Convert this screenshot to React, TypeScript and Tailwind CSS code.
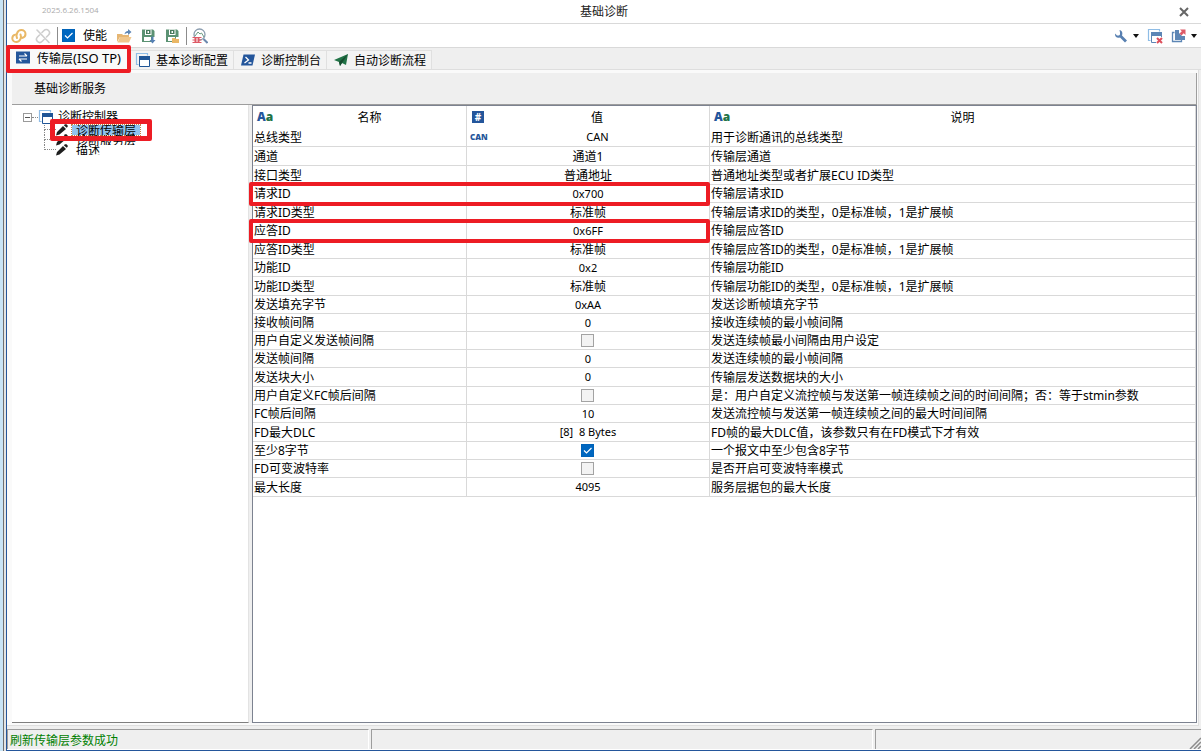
import type { ReactNode } from 'react';

type Row = {
  name: string;
  value: string | boolean;
  desc: string;
  tall?: boolean;
  marked?: boolean;
  can?: boolean;
};

const rows: Row[] = [
  { name: '总线类型', value: 'CAN', desc: '用于诊断通讯的总线类型', tall: true, can: true },
  { name: '通道', value: '通道1', desc: '传输层通道', tall: true },
  { name: '接口类型', value: '普通地址', desc: '普通地址类型或者扩展ECU ID类型', tall: true },
  { name: '请求ID', value: '0x700', desc: '传输层请求ID', marked: true },
  { name: '请求ID类型', value: '标准帧', desc: '传输层请求ID的类型，0是标准帧，1是扩展帧', tall: true },
  { name: '应答ID', value: '0x6FF', desc: '传输层应答ID', marked: true },
  { name: '应答ID类型', value: '标准帧', desc: '传输层应答ID的类型，0是标准帧，1是扩展帧', tall: true },
  { name: '功能ID', value: '0x2', desc: '传输层功能ID' },
  { name: '功能ID类型', value: '标准帧', desc: '传输层功能ID的类型，0是标准帧，1是扩展帧', tall: true },
  { name: '发送填充字节', value: '0xAA', desc: '发送诊断帧填充字节' },
  { name: '接收帧间隔', value: '0', desc: '接收连续帧的最小帧间隔' },
  { name: '用户自定义发送帧间隔', value: false, desc: '发送连续帧最小间隔由用户设定' },
  { name: '发送帧间隔', value: '0', desc: '发送连续帧的最小帧间隔' },
  { name: '发送块大小', value: '0', desc: '传输层发送数据块的大小', tall: true },
  { name: '用户自定义FC帧后间隔', value: false, desc: '是：用户自定义流控帧与发送第一帧连续帧之间的时间间隔；否：等于stmin参数' },
  { name: 'FC帧后间隔', value: '10', desc: '发送流控帧与发送第一帧连续帧之间的最大时间间隔' },
  { name: 'FD最大DLC', value: '[8]  8 Bytes', desc: 'FD帧的最大DLC值，该参数只有在FD模式下才有效', tall: true },
  { name: '至少8字节', value: true, desc: '一个报文中至少包含8字节' },
  { name: 'FD可变波特率', value: false, desc: '是否开启可变波特率模式' },
  { name: '最大长度', value: '4095', desc: '服务层据包的最大长度', tall: true },
];

const treeItems = ['诊断传输层', '诊断服务层', '描述'];

function Icon({ children }: { children: ReactNode }) {
  return (
    <svg viewBox="0 0 16 16" className="size-4 shrink-0" fill="none" aria-hidden="true">
      {children}
    </svg>
  );
}

function LinkIcon() {
  return (
    <Icon>
      <g stroke="#e9b866" strokeWidth="2" strokeLinecap="round">
        <path d="M6 10C4.800 7.500 6 2 10.300 2c2.500 0 4.200 1.800 4.200 4 0 2-1.500 3.600-3.500 3.900" />
        <path d="M9.500 6.500c1.200 2.500 0 7.500-4.300 7.500-2.300 0-3.900-1.700-3.900-3.800C1.300 8.300 2.600 7 4.300 6.600" />
      </g>
    </Icon>
  );
}

function UnlinkIcon() {
  return (
    <Icon>
      <g stroke="#cdcdcd" strokeWidth="1.600" strokeLinecap="round">
        <path d="M4.500 7 2.500 9a3 3 0 0 0 4.500 4.500l2-2M11.500 9l2-2A3 3 0 0 0 9 2.500l-2 2M2 2l12 12.500" />
      </g>
    </Icon>
  );
}

function FolderIcon() {
  return (
    <Icon>
      <path d="M1 14V6h5l1 1h6v2H4z" fill="#e6b673" />
      <path d="M4 9h11.500L13 14.500H1.500z" fill="#f0c68c" />
      <path d="M8.500 6.500c.3-2.200 1.500-3.500 3.500-3.500V1l3.500 3L12 7V5c-1.500 0-2.500.5-3.500 1.500z" fill="#5d86b5" />
    </Icon>
  );
}

function SaveIcon({ folder }: { folder?: boolean }) {
  return (
    <Icon>
      <path d="M2 1.500h11l1.500 1.500v6H12v5H2z" fill="#5b9273" />
      <path d="M5 1.500h6.500V7H5z" fill="#fff" />
      <path d="M6 2h4.500v4H6z" fill="#477a5d" />
      <path d="M7.500 3H9v2H7.500z" fill="#fff" />
      <path d="M4 9h7v4H4z" fill="#fff" />
      {folder ? (
        <path d="M8 10h3l1 1h3v4H8z" fill="#eab766" />
      ) : (
        <path d="M11.500 8.500h2V12h2l-3 3.500-3-3.500h2z" fill="#5580b3" />
      )}
    </Icon>
  );
}

function DebugSearchIcon() {
  return (
    <Icon>
      <circle cx="7.500" cy="6.500" r="5.500" stroke="#8b9daf" strokeWidth="1.300" />
      <path d="m11.500 11 4 4" stroke="#6c89ae" strokeWidth="2" />
      <path d="m3 8 3-4 2 2 1.500-1 2.500 4" stroke="#6b9a80" />
      <path d="M2.500 9h5v6h-5z" fill="#de5a66" />
      <path d="M.5 9.500h9M.5 12h9M.5 14.500h9" stroke="#de5a66" />
      <path d="M5 10v4" stroke="#fff" />
    </Icon>
  );
}

function WindowsIcon({ closed }: { closed?: boolean }) {
  const color = closed ? '#5d86b5' : '#1f5596';
  return (
    <Icon>
      <path d="M3.500 12.500h-2v-11h11v2" stroke="#8fbde6" strokeWidth="1.200" />
      <path d="M4.500 4.500h10v10h-10z" fill="#fff" stroke={color} />
      <path d="M4 4h11v4H4z" fill={color} />
      {closed && (
        <>
          <path d="M9 9h7v7H9z" fill="#fff" />
          <path d="m10 10 5 5m0-5-5 5" stroke="#dd4e5b" strokeWidth="2" />
        </>
      )}
    </Icon>
  );
}

function TransferIcon() {
  return (
    <Icon>
      <path d="M1 1.500h14v12H1z" fill="#24569b" />
      <path d="M4 6h8M9.500 3.500 12 6M12 9H4m2.500 2.500L4 9" stroke="#fff" strokeWidth="1.100" />
    </Icon>
  );
}

function ConsoleIcon() {
  return (
    <Icon>
      <path d="M3.500 2.500H15l-2.500 11H1z" fill="#24569b" />
      <path d="m5.500 5 3 3-4 3M8.500 11h3" stroke="#fff" strokeWidth="1.300" />
    </Icon>
  );
}

function PlaneIcon() {
  return (
    <Icon>
      <path d="M1 8 15 2l-2 11-4-2-2 3-1-4z" fill="#217346" />
      <path d="M6 10 15 2 7 14z" fill="#174d30" />
    </Icon>
  );
}

function WrenchIcon() {
  return (
    <Icon>
      <path
        d="M6.500 2C9 2.500 10 5 9 7.500l5 5-2 2-5-5C4.500 10.500 1.500 9 2 5.500l2 2H6l1-1V4.500z"
        fill="#5880b1"
      />
    </Icon>
  );
}

function PopoutIcon() {
  return (
    <Icon>
      <path d="M3.500 4.500h-2v9h9v-2" stroke="#5d86b5" strokeWidth="1.300" />
      <path d="M4 2h4v3l3 3h3v4H4z" fill="#5d86b5" />
      <path d="M9 1.500h5.500V7L12.700 5.200 10.500 7.500 8.500 5.500l2.300-2.200z" fill="#dd5a67" />
    </Icon>
  );
}

function PencilIcon() {
  return (
    <svg viewBox="0 0 12 12" className="size-3 shrink-0" aria-hidden="true">
      <path d="m0 11.500 1-3.500 6-6 3 3-6.500 5.500zM7.800 1.200 9 .3h1.500l1.200 1.200v1.300l-1 1z" fill="#1f1f1f" />
    </svg>
  );
}

function Caret() {
  return (
    <svg viewBox="0 0 6 4" className="h-1 w-1.5" aria-hidden="true">
      <path d="M0 0h6L3 4z" fill="#111" />
    </svg>
  );
}

function Checkbox({ label, id, checked }: { label?: string; id: string; checked: boolean }) {
  return (
    <span className="relative block size-[13px]">
      <input
        id={id}
        type="checkbox"
        aria-label={label}
        defaultChecked={checked}
        className="peer block size-[13px] appearance-none border border-[#a3a3a3] bg-[#f3f3f3] checked:border-[#0063b8] checked:bg-[#0067c0]"
      />
      <svg
        viewBox="0 0 13 13"
        className="pointer-events-none absolute inset-0 hidden size-[13px] peer-checked:block"
        fill="none"
        aria-hidden="true"
      >
        <path d="m3 6.500 2.500 2.500L10.500 4" stroke="#fff" strokeWidth="1.200" />
      </svg>
    </span>
  );
}

function Separator() {
  return <span className="h-[18px] w-px bg-[#8c8c8c]" />;
}

function ToolButton({ label, children }: { label: string; children: ReactNode }) {
  return (
    <button type="button" aria-label={label} className="flex items-center gap-1">
      {children}
    </button>
  );
}

function TitleBar() {
  return (
    <header className="grid h-6 grid-cols-3 items-center border-b border-[#d9d9d9] bg-white">
      <span className="pb-1 pl-[35px] font-['Open_Sans',sans-serif] text-[8px] leading-3 text-[#ababab]">
        2025.6.26.1504
      </span>
      <h1 className="text-center text-xs text-[#222]">基础诊断</h1>
      <button type="button" aria-label="关闭" className="justify-self-end pr-3">
        <svg viewBox="0 0 10 10" className="size-2.5" aria-hidden="true">
          <path d="m1 1 8 8m0-8-8 8" stroke="#666" strokeWidth="2" />
        </svg>
      </button>
    </header>
  );
}

function Toolbar() {
  return (
    <div className="flex h-6 items-center border-b border-[#d9d9d9] bg-white px-1">
      <div className="flex items-center gap-2">
        <ToolButton label="连接"><LinkIcon /></ToolButton>
        <ToolButton label="断开"><UnlinkIcon /></ToolButton>
      </div>
      <div className="ml-1.5 flex items-center gap-1">
        <Separator />
        <Checkbox id="enable" checked />
        <label htmlFor="enable" className="px-1">使能</label>
      </div>
      <div className="ml-[5px] flex items-center gap-2">
        <ToolButton label="打开"><FolderIcon /></ToolButton>
        <ToolButton label="保存"><SaveIcon /></ToolButton>
        <ToolButton label="另存为"><SaveIcon folder /></ToolButton>
      </div>
      <div className="ml-1.5 flex items-center gap-[5px]">
        <Separator />
        <ToolButton label="诊断调试"><DebugSearchIcon /></ToolButton>
      </div>
      <div className="ml-auto flex items-center gap-2">
        <ToolButton label="设置"><WrenchIcon /><Caret /></ToolButton>
        <ToolButton label="关闭窗口"><WindowsIcon closed /></ToolButton>
        <ToolButton label="弹出窗口"><PopoutIcon /><Caret /></ToolButton>
      </div>
    </div>
  );
}

function Tab({ icon, children }: { icon: ReactNode; children: ReactNode }) {
  return (
    <button
      type="button"
      role="tab"
      aria-selected="false"
      className="flex h-[19px] items-center gap-[5px] border-t border-r border-[#e0e0e0] bg-[#f3f3f3] pr-[5px] pl-1.5"
    >
      {icon}
      <span className="pt-0.5">{children}</span>
    </button>
  );
}

function Tabs() {
  return (
    <div role="tablist" className="flex h-[22px] items-end border-b border-[#dedede]">
      <button
        type="button"
        role="tab"
        aria-selected="true"
        className="relative flex h-[22px] w-[122px] items-center gap-1.5 bg-[#f9f9f9] pl-2 whitespace-nowrap"
      >
        <TransferIcon />
        <span className="pt-px">
          传输层<span className="text-[13px]">(ISO TP)</span>
        </span>
        <span className="absolute -top-0.5 -left-px z-10 h-7 w-[125px] rounded-xs border-4 border-[#ed1c24]" />
      </button>
      <Tab icon={<WindowsIcon />}>基本诊断配置</Tab>
      <Tab icon={<ConsoleIcon />}>诊断控制台</Tab>
      <Tab icon={<PlaneIcon />}>自动诊断流程</Tab>
    </div>
  );
}

function Tree() {
  return (
    <nav className="w-[237px] shrink-0 border-r border-b border-[#e3e3e3] border-b-[#7f7f7f] bg-white pt-1">
      <div className="flex h-4 items-center pl-[11px]">
        <span className="grid size-[9px] place-items-center border border-[#9a9a9a]">
          <span className="h-px w-[5px] bg-[#555]" />
        </span>
        <span className="w-1.5 border-t border-dotted border-[#888]" />
        <WindowsIcon />
        <span className="pl-1">诊断控制器</span>
      </div>
      <ul className="relative">
        {treeItems.map((item, i) => (
          <li key={item} className="flex h-2.5 items-center pl-8">
            <span className="flex h-2.5 w-3 flex-col">
              <span className="h-[5px] w-3 border-b border-l border-dotted border-[#888]" />
              {i < treeItems.length - 1 && (
                <span className="h-[5px] border-l border-dotted border-[#888]" />
              )}
            </span>
            <PencilIcon />
            <a
              href="#"
              className={
                i === 0
                  ? 'ml-1 h-2.5 overflow-hidden bg-[#91c3ee] px-1 leading-3 outline outline-dotted outline-[#c08040]'
                  : 'ml-1 h-2.5 overflow-hidden px-1 leading-3'
              }
            >
              {item}
            </a>
          </li>
        ))}
        <li
          aria-hidden="true"
          className="absolute -top-1.5 left-[38px] h-[22px] w-[102px] rounded-xs border-[5px] border-[#ed1c24]"
        />
      </ul>
    </nav>
  );
}

function TextIcon() {
  return (
    <span className="w-4 font-['Open_Sans',sans-serif] text-xs font-extrabold text-[#24569b]" aria-hidden="true">
      A<span className="text-[#217346]">a</span>
    </span>
  );
}

function HeadCell({ icon, children }: { icon: ReactNode; children: ReactNode }) {
  return (
    <th className="border-r border-[#d9d9d9] p-0 pl-1 font-normal">
      <div className="flex items-center">
        {icon}
        <span className="flex-1 pt-px text-center">{children}</span>
      </div>
    </th>
  );
}

function ParamTable() {
  return (
    <div className="min-w-0 flex-1 border border-[#7c8290] bg-white">
      <table className="w-full table-fixed border-separate border-spacing-0">
        <colgroup>
          <col className="w-[214px]" />
          <col className="w-[243px]" />
          <col />
        </colgroup>
        <thead>
          <tr className="h-[22px]">
            <HeadCell icon={<TextIcon />}>名称</HeadCell>
            <HeadCell
              icon={
                <span
                  className="mx-px grid h-3 w-3 place-items-center bg-[#24569b] text-[10px] leading-3 font-bold text-white"
                  aria-hidden="true"
                >
                  #
                </span>
              }
            >
              值
            </HeadCell>
            <HeadCell icon={<TextIcon />}>说明</HeadCell>
          </tr>
        </thead>
        <tbody>
          {rows.map((row, i) => (
            <tr key={row.name} className={row.tall ? 'relative h-[19px]' : 'relative h-[18px]'}>
              <td className="border-r border-b border-[#d9d9d9] p-0 pt-px pl-px">
                {row.name}
                {row.marked && (
                  <span className="absolute -top-[3px] -left-1 z-10 h-6 w-[461px] rounded-xs border-4 border-[#ed1c24]" />
                )}
              </td>
              <td className="border-r border-b border-[#d9d9d9] p-0 text-center">
                {typeof row.value === 'boolean' ? (
                  <div className="flex justify-center pr-px">
                    <Checkbox id={`param-${i}`} label={row.name} checked={row.value} />
                  </div>
                ) : row.can ? (
                  <div className="flex items-center pl-[3px]">
                    <span className="w-4 font-['Open_Sans',sans-serif] text-[8px] font-extrabold text-[#24569b]" aria-hidden="true">
                      CAN
                    </span>
                    <span className="flex-1 text-[11px]">{row.value}</span>
                  </div>
                ) : /^[\x00-\x7f]+$/.test(row.value) ? (
                  <span className="text-[11px] whitespace-pre">{row.value}</span>
                ) : (
                  <span className="block pt-px">{row.value}</span>
                )}
              </td>
              <td className="border-r border-b border-[#d9d9d9] p-0 pt-px pl-px whitespace-nowrap">{row.desc}</td>
            </tr>
          ))}
        </tbody>
      </table>
    </div>
  );
}

function StatusBar() {
  return (
    <footer className="flex h-[21px] gap-0.5 border-b border-white">
      <p className="w-[362px] border-t border-r border-l border-[#9d9d9d] border-r-white pt-[3px] pl-0.5 text-[#008000]">
        刷新传输层参数成功
      </p>
      <div className="w-[502px] border-t border-r border-l border-[#9d9d9d] border-r-white" />
      <div className="flex flex-1 items-end justify-end border-t border-l border-[#9d9d9d]">
        <svg viewBox="0 0 12 12" className="size-3" aria-hidden="true">
          <path d="M1 12 12 1M5 12l7-7M9 12l3-3" stroke="#8c8c8c" strokeWidth="1.500" />
        </svg>
      </div>
    </footer>
  );
}

export default function App() {
  return (
    <div className="flex min-h-screen bg-[#efefef] font-['Noto_Sans','Noto_Sans_CJK_SC',sans-serif] text-xs leading-4 text-black">
      <div className="w-1 border-r border-[#707070] bg-[#c9e4f6]" />
      <div className="w-0.5 bg-[#e4e4e4]" />
      <div className="flex min-w-0 flex-1 flex-col border-b border-l border-[#24569b]">
        <TitleBar />
        <Toolbar />
        <Tabs />
        <main className="mr-0.5 mb-[3px] flex flex-1 flex-col border-r border-b border-[#dedede] bg-[#fafafa] pt-[3px] pr-px pb-0.5 pl-[5px]">
          <div className="flex h-8 items-center border-r border-b border-[#9d9d9d] bg-[#efefef] pl-[22px]">
            <h2>基础诊断服务</h2>
          </div>
          <div className="flex flex-1 gap-[3px] bg-[#efefef]">
            <Tree />
            <ParamTable />
          </div>
        </main>
        <StatusBar />
      </div>
    </div>
  );
}
